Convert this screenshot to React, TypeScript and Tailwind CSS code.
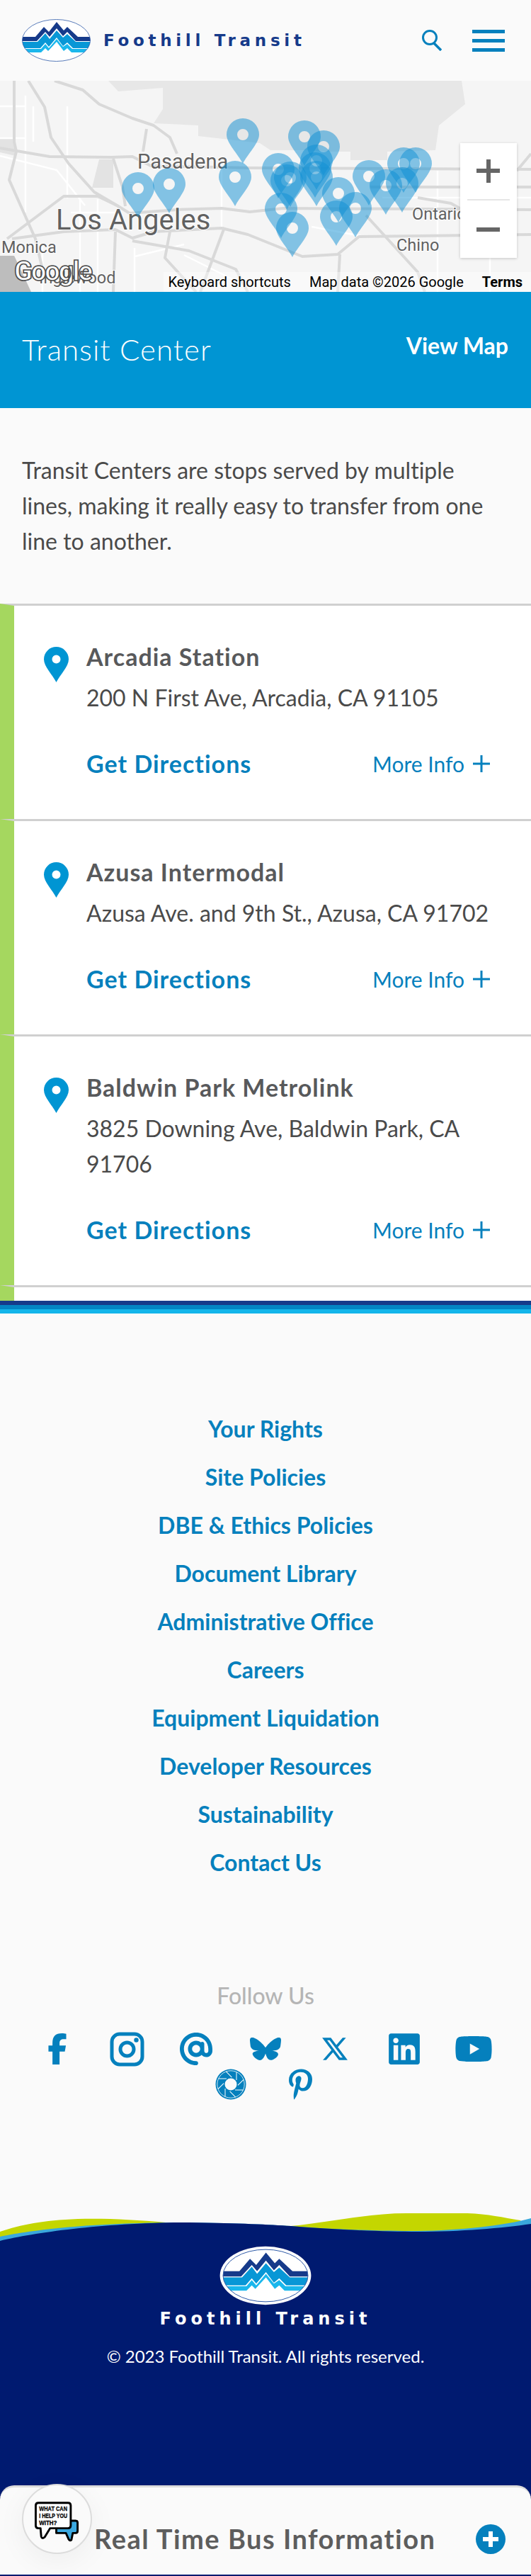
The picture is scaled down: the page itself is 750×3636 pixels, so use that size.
import { FaAt, FaBluesky, FaFacebookF, FaLinkedin, FaPinterestP, FaYoutube } from "react-icons/fa6";
import { RiTwitterXLine } from "react-icons/ri";

const STATIONS = [
  { name: "Arcadia Station", address: "200 N First Ave, Arcadia, CA 91105" },
  { name: "Azusa Intermodal", address: "Azusa Ave. and 9th St., Azusa, CA 91702" },
  { name: "Baldwin Park Metrolink", address: "3825 Downing Ave, Baldwin Park, CA 91706" },
];

const FOOTER_LINKS = [
  "Your Rights",
  "Site Policies",
  "DBE & Ethics Policies",
  "Document Library",
  "Administrative Office",
  "Careers",
  "Equipment Liquidation",
  "Developer Resources",
  "Sustainability",
  "Contact Us",
];

// hole centres of the map markers, in page coordinates
const MARKERS = [
  [195, 266], [239, 260], [343, 190], [332, 250], [430, 193], [457, 207], [393, 239], [397, 295],
  [410, 251], [405, 255], [447, 250], [447, 227], [445, 238], [413, 322], [478, 273], [475, 306],
  [502, 294], [521, 249], [545, 262], [568, 259], [570, 231], [587, 231],
];

const MAJOR_ROADS = [
  "M20 114 L20 200 L23 214 L13 254 L50 337 L60 380",
  "M0 209 L70 221 L157 222 L187 221 L213 234 L353 237 L750 239",
  "M40 114 L63 151 L72 194 L97 231 L133 271 L167 291 L183 301",
  "M77 114 L117 127 L140 147 L187 167 L217 177 L240 194 L250 217",
  "M160 224 L173 264 L177 291",
  "M10 337 L90 277 L138 277 L167 291",
  "M183 301 L250 296 L313 294 L353 299 L400 294 L750 296",
  "M17 337 L90 327 L163 324 L187 336 L217 327 L313 322 L350 331 L427 362 L477 359 L507 334 L750 331",
  "M163 327 L160 412",
  "M240 327 L233 364 L277 412",
  "M207 182 L202 214",
  "M317 321 L283 412",
  "M187 340 L267 354 L333 380 L350 412",
  "M517 304 L590 384 L600 412",
  "M480 359 L477 412",
  "M523 264 L750 264",
  "M730 241 L750 217",
  "M590 279 L637 287 L660 300",
];

const MINOR_ROADS = [
  "M138 281 L138 412",
  "M618 241 L618 412",
  "M692 364 L692 412",
  "M0 220 L80 240 L120 290",
  "M36 135 L36 300",
  "M47 150 L47 200",
  "M95 150 L95 280",
  "M113 280 L113 412",
  "M0 150 L36 150",
  "M0 195 L36 195",
  "M190 350 L190 412",
  "M313 240 L313 320",
  "M440 320 L520 335",
  "M260 360 L340 400",
  "M60 345 L60 412",
  "M190 362 L260 345",
  "M100 300 L170 300",
  "M540 279 L750 279",
];

function Logo({ id, ring, className }: { id: string; ring?: boolean; className: string }) {
  return (
    <svg viewBox={ring ? "-3.5 -3.5 104 67" : "0 0 97 60"} className={className}>
      {ring && <ellipse cx="48.5" cy="30" rx="51.5" ry="33" fill="#fff" />}
      <clipPath id={id}>
        <ellipse cx="48.5" cy="30" rx="48" ry="29.5" />
      </clipPath>
      <ellipse cx="48.5" cy="30" rx="48" ry="29.5" fill="#fff" />
      <g clipPath={`url(#${id})`}>
        <polygon fill="#163a8a" points="0,25 19,25 31,11 38,18 49,4 59,16 64,11 79,25 97,25 97,31 76,31 64,18 58,24 49,13 39,25 33,18 21,31 0,31" />
        <polygon fill="#0897d6" points="0,32 22,32 33,20 39,28 49,16 58,26 64,21 76,32 97,32 97,41 72,41 64,33 58,38 49,26 38,39 33,33 26,41 0,41" />
        <polygon fill="#1ab7ec" points="0,42 27,42 33,35 38,41 49,28 58,39 64,35 71,42 97,42 97,47 70,47 64,41 59,45 49,32 37,45 33,41 27,47 0,47" />
      </g>
      <ellipse cx="48.5" cy="30" rx="48" ry="29.5" fill="none" stroke="#2f5aa8" strokeWidth="0.8" />
    </svg>
  );
}

function MapPanel() {
  return (
    <div className="relative h-[298px] overflow-hidden bg-[#f5f5f5]">
      <svg viewBox="0 114 750 298" className="block h-[298px] w-[750px]">
        <polygon
          fill="#e7e7e7"
          points="153,114 167,129 230,124 230,154 217,174 280,177 280,192 367,202 382,212 433,212 460,214 495,214 495,226 547,226 547,214 615,212 620,177 657,147 652,114"
        />
        <polygon fill="#bdbdbd" points="0,361 20,361 44,412 0,412" />
        <polygon fill="#e3e3e3" points="140,225 160,225 160,265 130,265" />
        <polygon fill="#e3e3e3" points="0,195 20,195 22,220 0,215" />
        {MINOR_ROADS.map((d) => (
          <path key={d} d={d} fill="none" stroke="#fff" strokeWidth="2.5" />
        ))}
        {MAJOR_ROADS.map((d) => (
          <path key={d} d={d} fill="none" stroke="#d9d9d9" strokeWidth="4" strokeLinejoin="round" />
        ))}
        <g fontFamily="Roboto, sans-serif" fill="#616161" stroke="#fff" strokeWidth="2" paintOrder="stroke">
          <text x="194" y="238" fontSize="29">Pasadena</text>
          <text x="79" y="324" fontSize="40">Los Angeles</text>
          <text x="2" y="357" fontSize="23.5">Monica</text>
          <text x="55" y="400" fontSize="23.5">Inglewood</text>
          <text x="582" y="310" fontSize="23.5">Ontario</text>
          <text x="560" y="354" fontSize="23.5">Chino</text>
        </g>
        {MARKERS.map(([x, y]) => (
          <g key={`${x}-${y}`} transform={`translate(${x} ${y})`} opacity="0.5">
            <path
              d="M0 41 C-7 27 -23 12 -23 0 A23 23 0 1 1 23 0 C23 12 7 27 0 41 Z M8 0 A8 8 0 1 0 -8 0 A8 8 0 1 0 8 0 Z"
              fill="#0f8fd4"
              fillRule="evenodd"
            />
          </g>
        ))}
        <text
          x="20"
          y="396"
          fontFamily="Roboto, sans-serif"
          fontSize="38"
          fontWeight="700"
          letterSpacing="-2"
          fill="#fff"
          stroke="#4d4d4d"
          strokeWidth="1.6"
        >
          Google
        </text>
      </svg>

      <div className="absolute bottom-0 right-0 flex h-[28px] items-center gap-[26px] bg-white/40 pl-[6px] pr-[12px] font-['Roboto',sans-serif] text-[20px] text-black">
        <span>Keyboard shortcuts</span>
        <span>Map data ©2026 Google</span>
        <span className="font-bold">Terms</span>
      </div>

      <div className="absolute left-[650px] top-[88px] flex h-[162px] w-[80px] flex-col items-center bg-white shadow-[0_1px_4px_rgba(0,0,0,0.2)]">
        <div className="relative h-[81px] w-[60px] border-b-2 border-[#e6e6e6]">
          <div className="absolute left-[13px] top-[36px] h-[6px] w-[33px] bg-[#666]" />
          <div className="absolute left-[27px] top-[23px] h-[33px] w-[6px] bg-[#666]" />
        </div>
        <div className="relative h-[81px] w-[60px]">
          <div className="absolute left-[13px] top-[38px] h-[6px] w-[33px] bg-[#666]" />
        </div>
      </div>
    </div>
  );
}

function StationCard({ name, address }: { name: string; address: string }) {
  return (
    <li className="flex border-l-[20px] border-t-[3px] border-l-[#a5d75f] border-t-[#d0d0d0] bg-white pb-[53px] pl-[42px] pr-[58px] pt-[47px]">
      <svg viewBox="0 0 35 50" className="mt-[11px] h-[50px] w-[35px] shrink-0">
        <path
          d="M17.5 50 C12 39 0 28 0 17.5 A17.5 17.5 0 0 1 35 17.5 C35 28 23 39 17.5 50 Z M23.5 17.5 A6 6 0 1 0 11.5 17.5 A6 6 0 1 0 23.5 17.5 Z"
          fill="#0095d3"
          fillRule="evenodd"
        />
      </svg>
      <div className="ml-[25px] flex-1">
        <h3 className="text-[34px] font-bold leading-[50px] tracking-[1px] text-[#58595b]">{name}</h3>
        <p className="mt-[8px] text-[32px] leading-[50px] text-[#4a4a4a]">{address}</p>
        <div className="mt-[43px] flex items-center justify-between leading-[50px]">
          <a href="#" className="text-[34px] font-bold tracking-[1px] text-[#0580bd]">Get Directions</a>
          <a href="#" className="flex items-center gap-[12px] text-[30px] text-[#0580bd]">
            More Info
            <svg viewBox="0 0 24 24" className="h-[24px] w-[24px]">
              <path d="M12 0 V24 M0 12 H24" stroke="#0580bd" strokeWidth="3" />
            </svg>
          </a>
        </div>
      </div>
    </li>
  );
}

function InstagramIcon() {
  return (
    <svg viewBox="0 0 49 49" className="h-[49px] w-[49px]" fill="none" stroke="#0580bd">
      <rect x="3" y="3" width="43" height="43" rx="11" strokeWidth="5" />
      <circle cx="24.5" cy="24.5" r="9.5" strokeWidth="5" />
      <circle cx="37.5" cy="11.5" r="3.2" fill="#0580bd" stroke="none" />
    </svg>
  );
}

function ApertureIcon() {
  const blades = [0, 45, 90, 135, 180, 225, 270, 315];
  return (
    <svg viewBox="-22 -22 44 44" className="h-[44px] w-[44px]">
      <circle r="21.5" fill="#0580bd" />
      <circle r="19.2" fill="none" stroke="#fff" strokeWidth="0.8" />
      {blades.map((a) => (
        <line key={a} x1="8" y1="-6" x2="8" y2="-17.5" stroke="#fff" strokeWidth="1" transform={`rotate(${a})`} />
      ))}
      <circle r="8.5" fill="#fafafa" />
    </svg>
  );
}

function SocialIcons() {
  const icons = [
    <FaFacebookF key="fb" className="h-[44px] w-[28px]" />,
    <InstagramIcon key="ig" />,
    <FaAt key="at" className="h-[46px] w-[46px]" />,
    <FaBluesky key="bs" className="h-[32px] w-[44px]" preserveAspectRatio="none" />,
    <RiTwitterXLine key="x" className="h-[42px] w-[42px]" />,
    <FaLinkedin key="li" className="h-[50px] w-[44px]" />,
    <FaYoutube key="yt" className="h-[50px] w-[54px]" />,
    <ApertureIcon key="ap" />,
    <FaPinterestP key="pi" className="h-[44px] w-[33px]" />,
  ];
  return (
    <div className="mt-[25px] flex flex-wrap justify-center px-[32px] text-[#0580bd]">
      {icons.map((icon) => (
        <a key={icon.key} href="#" className="flex h-[50px] w-[98px] items-center justify-center">
          {icon}
        </a>
      ))}
    </div>
  );
}

function Wave() {
  return (
    <svg viewBox="0 3120 750 50" className="block h-[50px] w-[750px]">
      <path d="M0 3150 C30 3140 60 3134 110 3132 C150 3131 190 3133 234 3137 L411 3142 C470 3136 520 3124 574 3124 L660 3124 C690 3125 710 3130 735 3134 L750 3170 L0 3170 Z" fill="#c4d600" />
      <path d="M0 3157 C50 3147 130 3137 268 3137 C340 3138 380 3140 411 3142 C470 3147 540 3149 590 3149 C650 3148 710 3142 750 3131 L750 3170 L0 3170 Z" fill="#3aa8dc" />
      <path d="M0 3163 C50 3151 150 3137 268 3137 C340 3138 380 3140 411 3142 C470 3147 540 3150 590 3150 C650 3150 710 3145 750 3139 L750 3170 L0 3170 Z" fill="#001a70" />
    </svg>
  );
}

function HelpBubble() {
  return (
    <svg viewBox="0 0 98 98" className="h-[98px] w-[98px]">
      <path d="M48 51 H76 Q79 51 79 54 V66 Q79 69 76 69 H72 L70 79 Q68 81 66 78 L62 69 H48 Z" fill="#3aa8e0" stroke="#000" strokeWidth="3" strokeLinejoin="round" />
      <path d="M22 25 H65 Q69 25 69 29 V58 Q69 62 65 62 H39 L31 75 Q27 78 26 74 L25 62 H22 Q18 62 18 58 V29 Q18 25 22 25 Z" fill="#fff" stroke="#000" strokeWidth="3" strokeLinejoin="round" />
      <g fontFamily="'Liberation Sans', sans-serif" fontSize="10" fontWeight="700" fill="#000" stroke="#000" strokeWidth="0.3">
        <text x="23" y="37" textLength="41" lengthAdjust="spacingAndGlyphs">WHAT CAN</text>
        <text x="23" y="47" textLength="41" lengthAdjust="spacingAndGlyphs">I HELP YOU</text>
        <text x="23" y="57" textLength="26" lengthAdjust="spacingAndGlyphs">WITH?</text>
      </g>
    </svg>
  );
}

export default function App() {
  return (
    <div className="relative w-[750px] bg-[#fafafa] font-['Lato',sans-serif] [font-variant-ligatures:none]">
      {/* cabecera */}
      <header className="flex h-[114px] items-center pl-[31px] pr-[37px]">
        <Logo id="logo-top" className="h-[60px] w-[97px]" />
        <span className="ml-[18px] whitespace-nowrap font-['DejaVu_Sans',sans-serif] text-[23px] font-bold tracking-[5.7px] text-[#163a8a]">
          Foothill Transit
        </span>
        <svg viewBox="0 0 28 30" className="ml-auto h-[30px] w-[28px]" fill="none" stroke="#0580bd">
          <circle cx="11" cy="11" r="9.5" strokeWidth="3" />
          <path d="M17 19 L27 29" strokeWidth="3.5" />
        </svg>
        <div className="ml-[43px] flex w-[46px] flex-col gap-[8px]">
          <div className="h-[5px] bg-[#0580bd]" />
          <div className="h-[5px] bg-[#0580bd]" />
          <div className="h-[5px] bg-[#0580bd]" />
        </div>
      </header>

      <MapPanel />

      <section className="flex h-[164px] items-start justify-between bg-[#0095d3] pl-[31px] pr-[32px] pt-[51px] text-white">
        <h1 className="mt-[5px] text-[42px] font-light leading-[50px] tracking-[1px]">Transit Center</h1>
        <a href="#" className="text-[32px] font-bold leading-[50px]">View Map</a>
      </section>

      <p className="px-[31px] py-[63px] text-[32px] leading-[50px] text-[#4a4a4a]">
        Transit Centers are stops served by multiple lines, making it really easy to transfer from one line to another.
      </p>

      <ul>
        {STATIONS.map((s) => (
          <StationCard key={s.name} name={s.name} address={s.address} />
        ))}
        <li className="h-[22px] border-l-[20px] border-t-[3px] border-l-[#a5d75f] border-t-[#d0d0d0] bg-white" />
      </ul>

      {/* franjas */}
      <div className="h-[6px] bg-[#163a8a]" />
      <div className="h-[6px] bg-[#0385c4]" />
      <div className="h-[6px] bg-[#13b5ea]" />

      <footer>
        <nav className="flex flex-col items-center pt-[129px]">
          {FOOTER_LINKS.map((name) => (
            <a key={name} href="#" className="text-[32px] font-bold leading-[68px] text-[#0580bd]">
              {name}
            </a>
          ))}
        </nav>

        <p className="mt-[129px] text-center text-[32px] font-medium leading-[50px] text-[#b5b5b5]">Follow Us</p>
        <SocialIcons />

        <div className="h-[153px]" />
        <Wave />

        <div className="flex h-[466px] flex-col items-center bg-[#001a70] text-white">
          <Logo id="logo-bottom" ring className="h-[84px] w-[130px]" />
          <span className="mt-[4px] whitespace-nowrap font-['DejaVu_Sans',sans-serif] text-[24px] font-bold leading-[30px] tracking-[6px]">
            Foothill Transit
          </span>
          <p className="mt-[18px] text-[24px] leading-[40px]">© 2023 Foothill Transit. All rights reserved.</p>
        </div>
      </footer>

      {/* panel inferior */}
      <div className="absolute bottom-[2px] left-0 flex h-[126px] w-[750px] items-center justify-between rounded-t-[20px] border-t-[3px] border-[#dcdcdc] bg-[#fafafa] pl-[133px] pr-[36px] pt-[22px]">
        <div className="absolute left-[31px] top-[-5px] flex h-[99px] w-[99px] items-center justify-center rounded-full border-2 border-[#dcdcdc] bg-[#fafafa] shadow-[0_10px_40px_rgba(0,0,0,0.05)]">
          <HelpBubble />
        </div>
        <span className="text-[38px] font-bold tracking-[1.5px] text-[#5d5d5d]">Real Time Bus Information</span>
        <span className="relative h-[42px] w-[42px] rounded-full bg-[#0580bd]">
          <span className="absolute left-[10px] top-[18px] h-[6px] w-[22px] bg-white" />
          <span className="absolute left-[18px] top-[10px] h-[22px] w-[6px] bg-white" />
        </span>
      </div>
    </div>
  );
}
